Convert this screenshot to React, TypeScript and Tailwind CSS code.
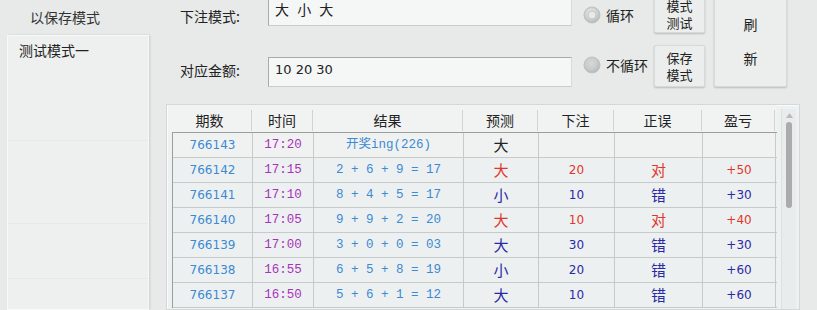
import React from 'react';

type Row = {
  id: string;
  time: string;
  result: string;
  guess: string;
  bet: string;
  ok: string;
  profit: string;
  win: boolean | null;
};

const rows: Row[] = [
  { id: '766143', time: '17:20', result: '开奖ing(226)', guess: '大', bet: '', ok: '', profit: '', win: null },
  { id: '766142', time: '17:15', result: '2 + 6 + 9 = 17', guess: '大', bet: '20', ok: '对', profit: '+50', win: true },
  { id: '766141', time: '17:10', result: '8 + 4 + 5 = 17', guess: '小', bet: '10', ok: '错', profit: '+30', win: false },
  { id: '766140', time: '17:05', result: '9 + 9 + 2 = 20', guess: '大', bet: '10', ok: '对', profit: '+40', win: true },
  { id: '766139', time: '17:00', result: '3 + 0 + 0 = 03', guess: '大', bet: '30', ok: '错', profit: '+30', win: false },
  { id: '766138', time: '16:55', result: '6 + 5 + 8 = 19', guess: '小', bet: '20', ok: '错', profit: '+60', win: false },
  { id: '766137', time: '16:50', result: '5 + 6 + 1 = 12', guess: '大', bet: '10', ok: '错', profit: '+60', win: false },
];

const Radio = ({ checked, label }: { checked: boolean; label: string }) => (
  <div className="flex items-center h-[18px]">
    <svg width="18" height="18" viewBox="0 0 18 18">
      <defs>
        <radialGradient id={checked ? 'rg1' : 'rg2'} cx="45%" cy="40%" r="60%">
          <stop offset="0%" stopColor={checked ? '#f4f5f5' : '#d6d9d8'} />
          <stop offset="60%" stopColor={checked ? '#cfd2d1' : '#c9cccb'} />
          <stop offset="100%" stopColor="#b3b7b6" />
        </radialGradient>
      </defs>
      <circle cx="9" cy="9" r="8" fill={`url(#${checked ? 'rg1' : 'rg2'})`} stroke="#bfc3c2" strokeWidth="1" />
      {checked && <circle cx="9" cy="9" r="4" fill="#e9ebea" stroke="#c2c5c4" strokeWidth="1" />}
    </svg>
    <span className="ml-[5px] text-[14px] text-[#222]">{label}</span>
  </div>
);

const cols = 'grid grid-cols-[80px_61px_150px_75px_76px_88px_73px]';

export default function App() {
  return (
    <div
      className="flex w-[817px] h-[310px] overflow-hidden bg-[#e7eae9] text-[#222]"
      style={{ fontFamily: '"Noto Sans CJK SC", "DejaVu Sans", sans-serif' }}
    >
      {/* left side */}
      <div className="w-[160px] shrink-0 flex flex-col">
        <div className="h-[35px] pl-[30px] flex items-center text-[14px] text-[#333]">以保存模式</div>
        <div className="ml-[7px] w-[142px] flex-1 bg-[#edf0ef] border border-[#f7f8f8] shadow-[1px_0_2px_rgba(0,0,0,0.12)] flex flex-col">
          <div className="h-[105px] pl-[11px] pt-[4px] text-[14px] border-b border-[#e6e9e8]">测试模式一</div>
          <div className="h-[83px] border-b border-[#e6e9e8]" />
          <div className="h-[55px] border-b border-[#e6e9e8]" />
        </div>
      </div>

      {/* right side */}
      <div className="flex-1 flex flex-col">
        <div className="flex -mt-[5px] h-[92px]">
          <div className="w-[108px] pl-[20px] flex flex-col text-[14px]">
            <div className="mt-[12px] h-[18px] leading-[18px]">下注模式:</div>
            <div className="mt-[36px] h-[18px] leading-[18px]">对应金额:</div>
          </div>
          <div className="w-[304px] flex flex-col text-[14px]">
            <div className="mt-[2px] h-[29px] bg-[#f5f6f6] border border-[#a7abaa] border-r-[#d8dbda] border-b-[#c9cccb] pl-[6px] leading-[22px] whitespace-pre tracking-[1px] [word-spacing:3px]">大 小 大</div>
            <div className="mt-[31px] h-[30px] bg-[#f5f6f6] border border-[#a7abaa] border-r-[#d8dbda] border-b-[#c9cccb] pl-[6px] pt-[3px] leading-[18px] text-[13px]" style={{ fontFamily: '"DejaVu Sans", sans-serif' }}>10 20 30</div>
          </div>
          <div className="w-[82px] pl-[11px] flex flex-col">
            <div className="mt-[11px]"><Radio checked label="循环" /></div>
            <div className="mt-[32px]"><Radio checked={false} label="不循环" /></div>
          </div>
          <div className="w-[51px] flex flex-col text-[13px] leading-[17px]">
            <div className="h-[38px] bg-[#eceeed] border border-[#d7dad9] rounded-[2px] shadow-[0_1px_2px_rgba(0,0,0,0.2)] flex flex-col items-center justify-end pb-[1px]">
              <span className="block">模式</span>
              <span className="block">测试</span>
            </div>
            <div className="mt-[12px] h-[42px] bg-[#eceeed] border border-[#d7dad9] rounded-[2px] shadow-[0_1px_2px_rgba(0,0,0,0.2)] flex flex-col items-center justify-center">
              <span className="block">保存</span>
              <span className="block">模式</span>
            </div>
          </div>
          <div className="ml-[9px] w-[73px] h-[92px] bg-[#eceeed] border border-[#d7dad9] rounded-[2px] shadow-[0_1px_2px_rgba(0,0,0,0.2)] flex flex-col items-center text-[14px] leading-[18px]">
            <span className="mt-[19px]">刷</span>
            <span className="mt-[16px]">新</span>
          </div>
        </div>

        {/* table */}
        <div className="mt-[17px] ml-[6px] w-[634px] flex-1 bg-[#eef1f1] border border-[#d4d8d7] shadow-[inset_1px_1px_0_#fafbfb] flex">
          <div className="w-[610px] flex flex-col">
            <div className="ml-[1px] h-[27px] grid grid-cols-[84px_61px_150px_75px_76px_88px_73px] text-[14px] bg-[#f1f3f3]">
              {['期数', '时间', '结果', '预测', '下注', '正误', '盈亏'].map((h) => (
                <div key={h} className="flex items-center justify-center border-r border-[#cfd3d2] my-[5px]">
                  {h}
                </div>
              ))}
            </div>
            <div className="ml-[5px] border-l border-t border-[#9a9e9d]">
              {rows.map((r, i) => {
                const c = r.win === null ? 'text-[#222]' : r.win ? 'text-[#e2352c]' : 'text-[#2a2aa6]';
                return (
                  <div
                    key={r.id}
                    className={`${cols} h-[25px] items-center text-center border-b border-[#c6cac9] ${i === 0 ? 'bg-[#f0f2f2]' : 'bg-[#edf0f0]'}`}
                  >
                    <div className="h-full flex items-center justify-center border-r border-[#c6cac9] text-[12px] text-[#3b8ad2]" style={{ fontFamily: '"DejaVu Sans", sans-serif' }}>{r.id}</div>
                    <div className="h-full flex items-center justify-center border-r border-[#c6cac9] text-[12.5px] text-[#a733bb]" style={{ fontFamily: '"Liberation Mono", monospace' }}>{r.time}</div>
                    <div className="h-full flex items-center justify-center border-r border-[#c6cac9] text-[12.5px] text-[#3b8ad2] whitespace-pre" style={{ fontFamily: '"Liberation Mono", "Noto Sans CJK SC", monospace' }}>{r.result}</div>
                    <div className={`h-full flex items-center justify-center border-r border-[#c6cac9] text-[15px] ${c}`}>{r.guess}</div>
                    <div className={`h-full flex items-center justify-center border-r border-[#c6cac9] text-[12px] ${c}`} style={{ fontFamily: '"DejaVu Sans", sans-serif' }}>{r.bet}</div>
                    <div className={`h-full flex items-center justify-center border-r border-[#c6cac9] text-[15px] ${c}`}>{r.ok}</div>
                    <div className={`h-full flex items-center justify-center border-r border-[#c6cac9] text-[12px] ${c}`} style={{ fontFamily: '"DejaVu Sans", sans-serif' }}>{r.profit}</div>
                  </div>
                );
              })}
            </div>
          </div>
          {/* scrollbar */}
          <div className="ml-[4px] mt-[4px] w-[15px] flex flex-col items-center bg-[#e9ecec] border-l border-[#dde0df]">
            <svg width="9" height="7" viewBox="0 0 9 7" className="mt-[3px]">
              <path d="M1 6 L4.5 1 L8 6 Z" fill="#b9bcbb" />
            </svg>
            <div className="mt-[3px] w-[6px] h-[86px] rounded-[3px] bg-[#a9acab]" />
          </div>
        </div>
      </div>
    </div>
  );
}
